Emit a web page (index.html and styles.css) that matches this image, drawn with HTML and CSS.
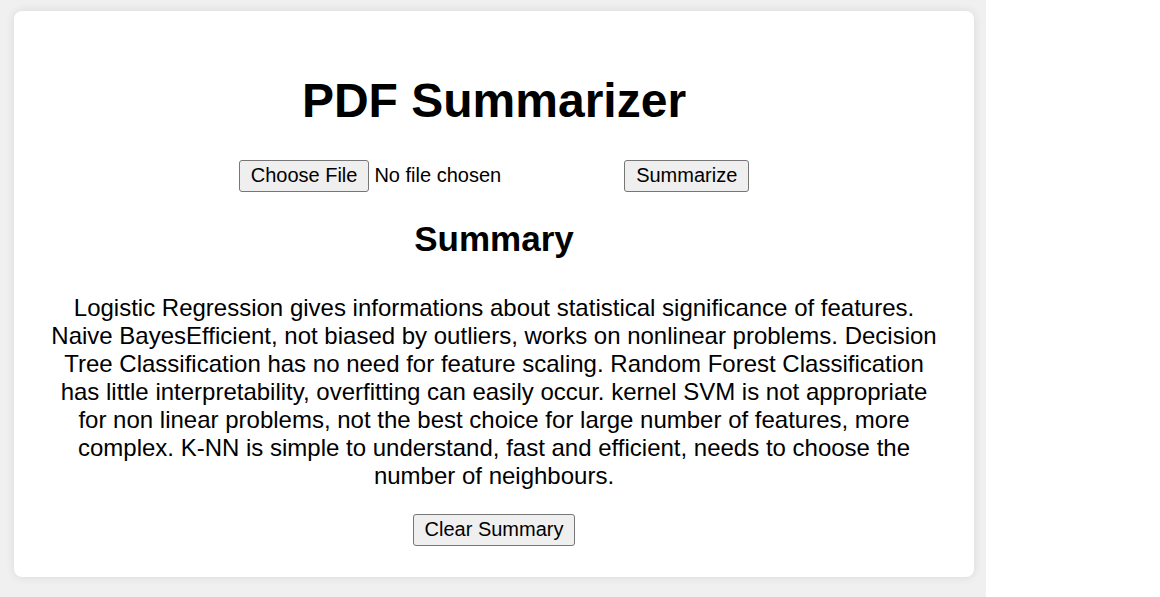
FILE: index.html
```html
<!DOCTYPE html>
<html lang="en">
<head>
<meta charset="utf-8">
<title>PDF Summarizer</title>
<link rel="stylesheet" href="styles.css">
</head>
<body>
<div class="page">
  <div class="card">
    <h1 class="title">PDF Summarizer</h1>
    <form class="upload">
      <input class="file" type="file" accept="application/pdf">
      <button class="btn" type="button">Summarize</button>
    </form>
    <h2 class="summary-title">Summary</h2>
    <p class="summary-text">Logistic Regression gives informations about statistical significance of features. Naive BayesEfficient, not biased by outliers, works on nonlinear problems. Decision Tree Classification has no need for feature scaling. Random Forest Classification has little interpretability, overfitting can easily occur. kernel SVM is not appropriate for non linear problems, not the best choice for large number of features, more complex. K-NN is simple to understand, fast and efficient, needs to choose the number of neighbours.</p>
    <button class="btn" type="button">Clear Summary</button>
  </div>
</div>
</body>
</html>
```

FILE: styles.css
```css
html, body {
  margin: 0;
  padding: 0;
  background: #ffffff;
}

body {
  font-family: "Liberation Sans", Arial, sans-serif;
  color: #000;
}

.page {
  width: 986px;
  box-sizing: border-box;
  min-height: 597px;
  background: #f0f0f0;
  padding: 11px 12px 21px 14px;
}

.card {
  background: #fff;
  border-radius: 8px;
  box-shadow: 0 0 10px rgba(0, 0, 0, 0.1);
  padding: 30px 30px 31px;
  text-align: center;
}

.title {
  font-size: 48px;
  font-weight: bold;
  margin: 32px 0;
}

.upload {
  margin: 0;
}

.file {
  font-family: "Liberation Sans", Arial, sans-serif;
  font-size: 20px;
  width: 381px;
  color: #000;
}

.file::file-selector-button {
  font-family: "Liberation Sans", Arial, sans-serif;
  font-size: 20px;
  color: #000;
  background: #efefef;
  border: 1px solid #767676;
  border-radius: 3px;
  padding: 3px 11px 4px;
  margin-right: 5px;
}

.btn {
  font-family: "Liberation Sans", Arial, sans-serif;
  font-size: 20px;
  color: #000;
  background: #efefef;
  border: 1px solid #767676;
  border-radius: 3px;
  padding: 3px 11px 4px;
}

.summary-title {
  font-size: 35px;
  margin: 27px 0 35px;
}

.summary-text {
  font-size: 24px;
  margin: 0 0 24px;
}
```
